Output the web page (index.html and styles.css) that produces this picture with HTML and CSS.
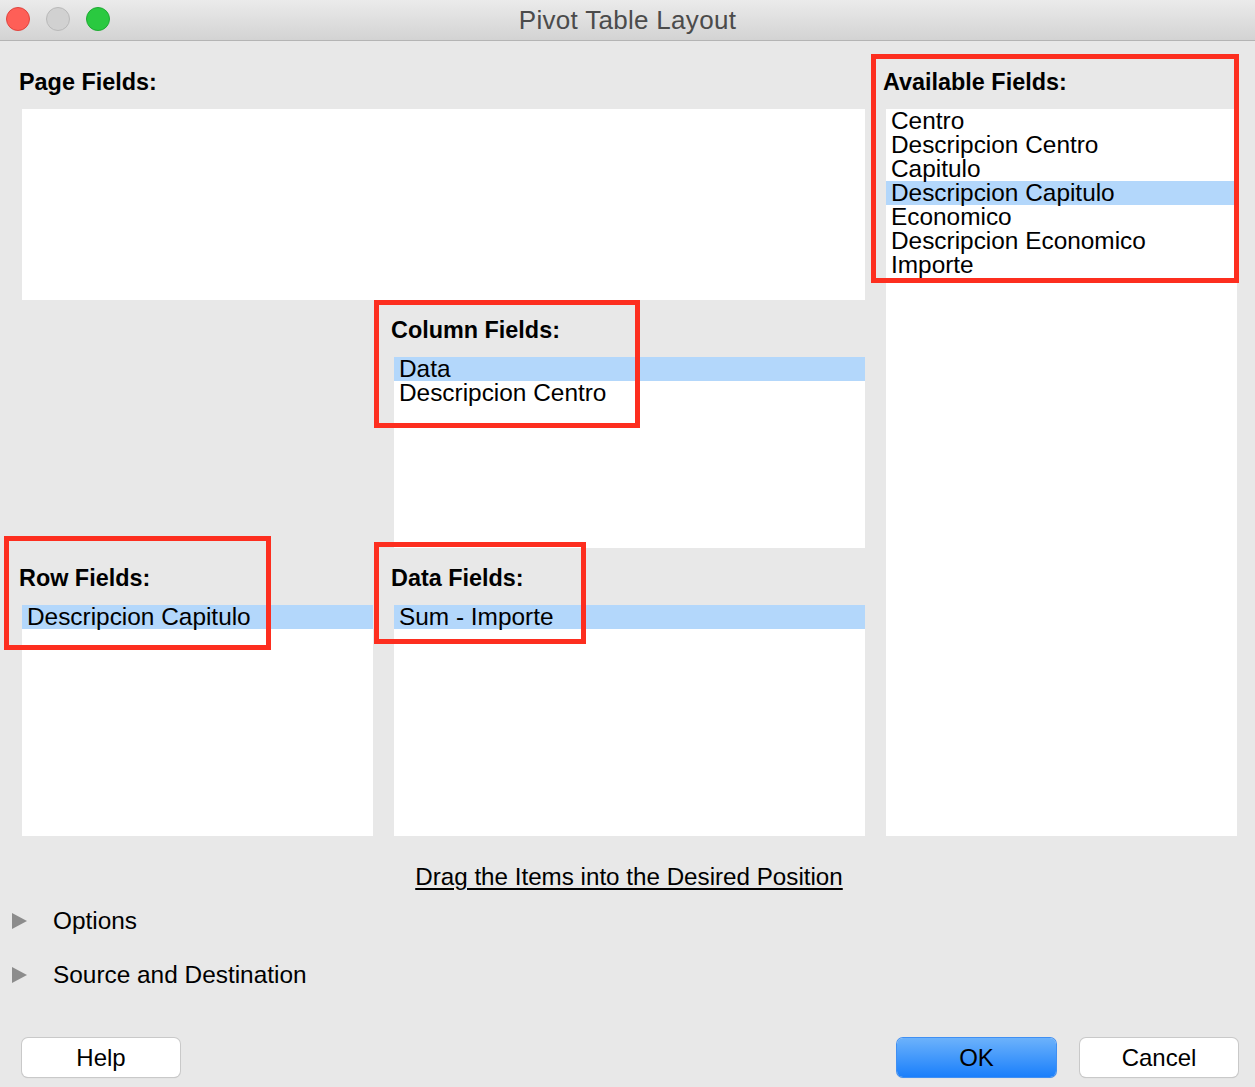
FILE: index.html
```html
<!DOCTYPE html>
<html lang="en">
<head>
<meta charset="utf-8">
<title>Pivot Table Layout</title>
<link rel="stylesheet" href="styles.css">
</head>
<body>
<div class="window">
  <header class="titlebar">
    <div class="lights">
      <span class="light red"></span>
      <span class="light gray"></span>
      <span class="light green"></span>
    </div>
    <div class="title">Pivot Table Layout</div>
    <div></div>
  </header>

  <main class="content">
    <div class="layout">
      <div class="label page-label">Page Fields:</div>
      <div class="box page-box"></div>

      <div class="label avail-label">Available Fields:</div>
      <ul class="box list avail-box">
        <li>Centro</li>
        <li>Descripcion Centro</li>
        <li>Capitulo</li>
        <li class="sel">Descripcion Capitulo</li>
        <li>Economico</li>
        <li>Descripcion Economico</li>
        <li>Importe</li>
      </ul>

      <div class="label col-label">Column Fields:</div>
      <ul class="box list col-box">
        <li class="sel">Data</li>
        <li>Descripcion Centro</li>
      </ul>

      <div class="label row-label">Row Fields:</div>
      <ul class="box list row-box">
        <li class="sel">Descripcion Capitulo</li>
      </ul>

      <div class="label data-label">Data Fields:</div>
      <ul class="box list data-box">
        <li class="sel">Sum - Importe</li>
      </ul>
    </div>

    <div class="hint"><span>Drag the Items into the Desired Position</span></div>

    <div class="expander"><span class="tri"></span><span>Options</span></div>
    <div class="expander"><span class="tri"></span><span>Source and Destination</span></div>

    <div class="buttons">
      <button class="btn">Help</button>
      <div class="spacer"></div>
      <button class="btn primary">OK</button>
      <button class="btn">Cancel</button>
    </div>
  </main>

  <div class="callout callout-avail"></div>
  <div class="callout callout-col"></div>
  <div class="callout callout-row"></div>
  <div class="callout callout-data"></div>
</div>
</body>
</html>
```

FILE: styles.css
```css
html, body {
  margin: 0;
  padding: 0;
}

body {
  background: #e8e8e8;
  font-family: "Liberation Sans", Arial, sans-serif;
  color: #000;
}

.window {
  position: relative;
  width: 1255px;
  height: 1087px;
  overflow: hidden;
  background: #e8e8e8;
}

/* Title bar */
.titlebar {
  height: 40px;
  border-bottom: 1px solid #b4b4b4;
  background: linear-gradient(#ebebeb, #d3d3d3);
  display: grid;
  grid-template-columns: 1fr auto 1fr;
  align-items: center;
}

.lights {
  display: flex;
  gap: 16px;
  margin-left: 6px;
  margin-top: -2px;
}

.light {
  width: 24px;
  height: 24px;
  border-radius: 50%;
  box-sizing: border-box;
}

.light.red {
  background: #fe5f57;
  border: 1px solid #e0443e;
}

.light.gray {
  background: #d1d1d1;
  border: 1px solid #b9b9b9;
}

.light.green {
  background: #2ac940;
  border: 1px solid #1eaa33;
}

.title {
  font-size: 26px;
  color: #4b4b4b;
  letter-spacing: 0.3px;
  margin-top: 1px;
}

/* Content */
.content {
  padding-top: 11px;
}

.layout {
  margin-left: 22px;
  display: grid;
  grid-template-columns: 351px 21px 471px 21px 351px;
  grid-template-rows: 57px 191px 57px 191px 57px 231px;
}

.label {
  font-weight: bold;
  font-size: 23.4px;
  margin-left: -3px;
  padding-top: 3px;
  display: flex;
  align-items: center;
}

.box {
  background: #fff;
  margin: 0;
  padding: 0;
}

.list {
  list-style: none;
  font-size: 24.4px;
  line-height: 24px;
}

.list li {
  height: 24px;
  padding-left: 5px;
  white-space: nowrap;
}

.list li.sel {
  background: #b3d7fb;
}

.page-label { grid-column: 1 / 4; grid-row: 1; }
.page-box   { grid-column: 1 / 4; grid-row: 2; }

.avail-label { grid-column: 5; grid-row: 1; }
.avail-box   { grid-column: 5; grid-row: 2 / 7; }

.col-label { grid-column: 3; grid-row: 3; }
.col-box   { grid-column: 3; grid-row: 4; }

.row-label { grid-column: 1; grid-row: 5; }
.row-box   { grid-column: 1; grid-row: 6; }

.data-label { grid-column: 3; grid-row: 5; }
.data-box   { grid-column: 3; grid-row: 6; }

/* Hint */
.hint {
  margin-top: 27px;
  height: 28px;
  line-height: 28px;
  text-align: center;
  font-size: 24.2px;
  padding-left: 3px;
}

.hint span {
  text-decoration: underline;
  text-underline-offset: 3px;
}

/* Expanders */
.expander {
  height: 54px;
  display: flex;
  align-items: center;
  font-size: 24.4px;
}

.hint + .expander {
  margin-top: 3px;
}

.tri {
  width: 0;
  height: 0;
  margin-left: 12px;
  margin-right: 26px;
  border-left: 15px solid #8c8c8c;
  border-top: 8.5px solid transparent;
  border-bottom: 8.5px solid transparent;
}

/* Buttons */
.buttons {
  margin-top: 36px;
  display: flex;
  padding: 0 17px 0 22px;
  gap: 24px;
}

.spacer {
  flex: 1;
}

.btn {
  width: 158px;
  height: 39px;
  border: none;
  border-radius: 6px;
  background: #fff;
  box-shadow: 0 0 0 1px #c9c9c9, 0 1px 1px rgba(0, 0, 0, 0.18);
  font-family: "Liberation Sans", Arial, sans-serif;
  font-size: 24px;
  color: #000;
  padding: 0;
}

.btn.primary {
  width: 159px;
  background: linear-gradient(#6cb2fb, #1a7ffb);
  box-shadow: 0 0 0 1px #3f8ff3, 0 1px 1px rgba(0, 0, 0, 0.18);
}

/* Red annotation callouts */
.callout {
  position: absolute;
  border: 5px solid #fd2e1f;
  box-sizing: border-box;
  pointer-events: none;
}

.callout-avail {
  left: 871px;
  top: 54px;
  width: 368px;
  height: 229px;
}

.callout-col {
  left: 374px;
  top: 300px;
  width: 266px;
  height: 128px;
}

.callout-row {
  left: 4px;
  top: 536px;
  width: 267px;
  height: 114px;
}

.callout-data {
  left: 374px;
  top: 542px;
  width: 212px;
  height: 102px;
}
```
